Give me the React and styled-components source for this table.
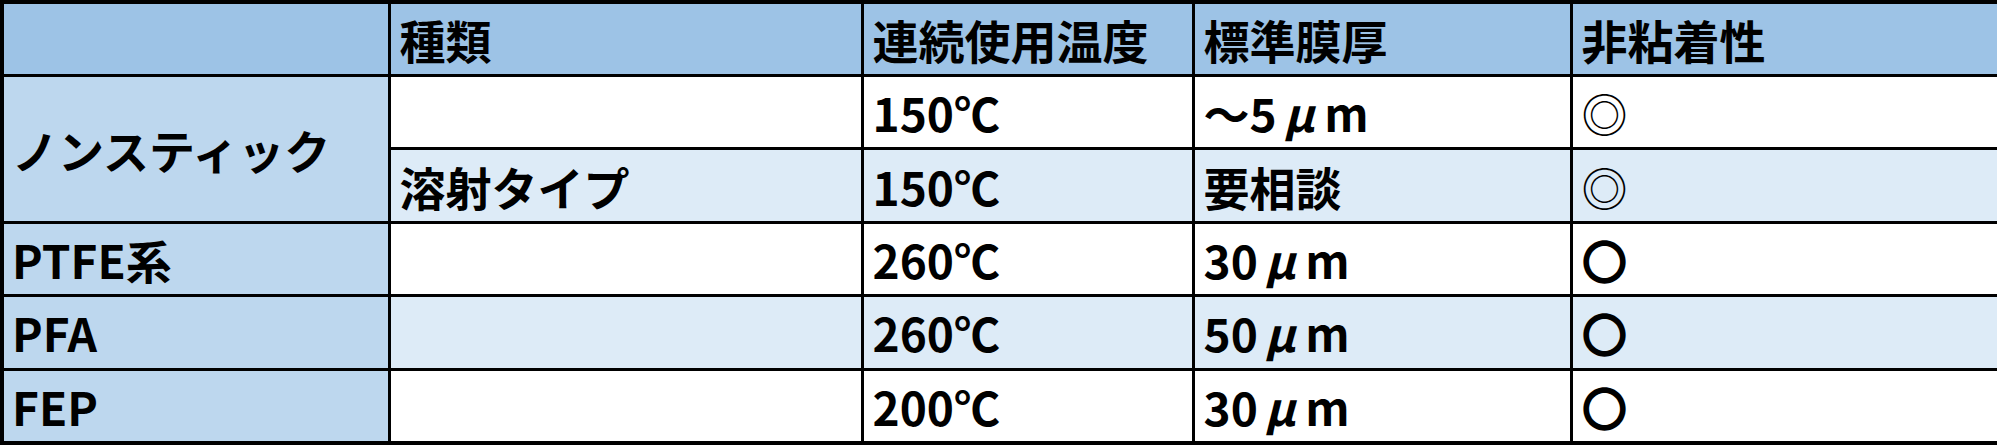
import styled, { createGlobalStyle } from 'styled-components';

const GlobalStyle = createGlobalStyle`
  html, body {
    margin: 0;
    padding: 0;
    background: #ffffff;
  }
`;

const Table = styled.table`
  width: 1997px;
  height: 445px;
  table-layout: fixed;
  border-collapse: collapse;
  border: 4px solid #000;
  font-family: "Noto Sans CJK JP", "Noto Sans", sans-serif;
  font-weight: 700;
  font-size: 46px;
  color: #000;
`;

const HeadCell = styled.th`
  background-color: #9dc3e6;
  border: 3px solid #000;
  text-align: left;
  font-weight: 700;
  padding: 0 9px;
  height: 70px;
  line-height: 1;
  white-space: nowrap;
`;

const NameCell = styled.td`
  background-color: #bdd7ee;
  border: 3px solid #000;
  padding: 0 8px;
  line-height: 1;
  white-space: nowrap;
`;

const Cell = styled.td`
  background-color: ${(p) => (p.$shaded ? '#ddebf7' : '#ffffff')};
  border: 3px solid #000;
  padding: 0 9px;
  height: 70px;
  line-height: 1;
  white-space: nowrap;
`;

const Mark = styled.span`
  font-weight: ${(p) => (p.$thin ? 400 : 700)};
`;

const Mu = styled.span`
  display: inline-block;
  font-style: italic;
  margin: 0 10px 0 7px;
`;

const columns = [387, 473, 331, 378, 428];
const headers = ['', '種類', '連続使用温度', '標準膜厚', '非粘着性'];

const Micron = ({ prefix }) => (
  <>
    {prefix}
    <Mu>μ</Mu>m
  </>
);

const rows = [
  { name: 'ノンスティック', span: 2, type: '', temp: '150℃', film: <Micron prefix="～5" />, mark: '◎', thin: true },
  { type: '溶射タイプ', temp: '150℃', film: '要相談', mark: '◎', thin: true, shaded: true },
  { name: 'PTFE系', type: '', temp: '260℃', film: <Micron prefix="30" />, mark: '〇' },
  { name: 'PFA', type: '', temp: '260℃', film: <Micron prefix="50" />, mark: '〇', shaded: true },
  { name: 'FEP', type: '', temp: '200℃', film: <Micron prefix="30" />, mark: '〇' },
];

export default function App() {
  return (
    <>
      <GlobalStyle />
      <Table>
        <colgroup>
          {columns.map((w, i) => (
            <col key={i} style={{ width: w }} />
          ))}
        </colgroup>
        <thead>
          <tr>
            {headers.map((h, i) => (
              <HeadCell key={i}>{h}</HeadCell>
            ))}
          </tr>
        </thead>
        <tbody>
          {rows.map((r, i) => (
            <tr key={i}>
              {r.name !== undefined && <NameCell rowSpan={r.span || 1}>{r.name}</NameCell>}
              <Cell $shaded={r.shaded}>{r.type}</Cell>
              <Cell $shaded={r.shaded}>{r.temp}</Cell>
              <Cell $shaded={r.shaded}>{r.film}</Cell>
              <Cell $shaded={r.shaded}>
                <Mark $thin={r.thin}>{r.mark}</Mark>
              </Cell>
            </tr>
          ))}
        </tbody>
      </Table>
    </>
  );
}
